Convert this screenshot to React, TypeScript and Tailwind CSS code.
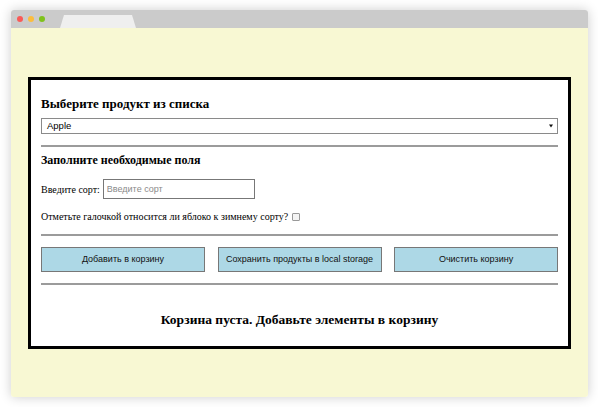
import React from "react";

const serif = { fontFamily: '"Liberation Serif", "Times New Roman", serif' };
const sans = { fontFamily: '"Liberation Sans", Arial, sans-serif' };

function Divider({ className = "" }: { className?: string }) {
    return <div className={`h-[2px] bg-[#9b9b9b] ${className}`} />;
}

export default function App() {
    return (
        <div className="w-[598px] h-[407px] bg-white pt-[10px] pl-[11px] overflow-hidden">
            <div className="w-[577px] h-[387px] rounded-[3px] overflow-hidden shadow-[0_0_12px_rgba(0,0,0,0.2)] flex flex-col">
                {/* browser chrome */}
                <div className="h-[18px] bg-[#cbcbcb] flex items-end pl-[6px] shrink-0">
                    <div className="flex items-center gap-[5px] self-center">
                        <span className="w-[6px] h-[6px] rounded-full bg-[#f95a57]" />
                        <span className="w-[6px] h-[6px] rounded-full bg-[#fbbd3e]" />
                        <span className="w-[6px] h-[6px] rounded-full bg-[#7fc21c]" />
                    </div>
                    <div className="ml-[15px] w-[76px] h-[13px] bg-[#efefef] [clip-path:polygon(4px_0,72px_0,76px_100%,0_100%)] rounded-t-[3px]" />
                </div>

                <div className="flex-1 bg-[#f8f8d3] pt-[49px] pl-[17px]">
                    <div className="w-[543px] h-[272px] bg-white border-[3px] border-black px-[10px] flex flex-col" style={serif}>
                        <h2 className="mt-[15px] text-[13px] leading-[17px] font-bold text-black">Выберите продукт из списка</h2>
                        <div
                            className="mt-[6px] h-[16px] border border-[#8a8a8a] flex items-center justify-between pl-[5px] pr-[4px] text-[9.5px] text-black"
                            style={sans}
                        >
                            <span>Apple</span>
                            <svg width="4" height="4" viewBox="0 0 4 4"><path d="M0 0.5h4L2 3.5z" fill="#111" /></svg>
                        </div>
                        <Divider className="mt-[11px]" />
                        <h3 className="mt-[5px] text-[12px] leading-[17px] font-bold text-black">Заполните необходимые поля</h3>
                        <div className="mt-[10px] flex items-center">
                            <span className="text-[10px] text-black">Введите сорт:</span>
                            <input
                                placeholder="Введите сорт"
                                className="ml-[3px] w-[152px] h-[20px] border-[1.5px] border-[#777] px-[3px] text-[9px] placeholder:text-[#8a8a8a] outline-none"
                                style={sans}
                            />
                        </div>
                        <div className="mt-[10px] flex items-center text-[10px] text-black">
                            <span>Отметьте галочкой относится ли яблоко к зимнему сорту?</span>
                            <span className="ml-[4px] w-[8px] h-[8px] border border-[#999] rounded-[1px] bg-[#f4f4f4]" />
                        </div>
                        <Divider className="mt-[10px]" />
                        <div className="mt-[11px] flex justify-between" style={sans}>
                            {["Добавить в корзину", "Сохранить продукты в local storage", "Очистить корзину"].map((t) => (
                                <button
                                    key={t}
                                    className="w-[164px] h-[25px] bg-[#add8e6] border border-[#777] text-[9px] text-[#111] whitespace-nowrap"
                                >
                                    {t}
                                </button>
                            ))}
                        </div>
                        <Divider className="mt-[11px]" />
                        <p className="mt-[26px] text-center text-[13.5px] leading-[17px] font-bold text-black">
                            Корзина пуста. Добавьте элементы в корзину
                        </p>
                    </div>
                </div>
            </div>
        </div>
    );
}
